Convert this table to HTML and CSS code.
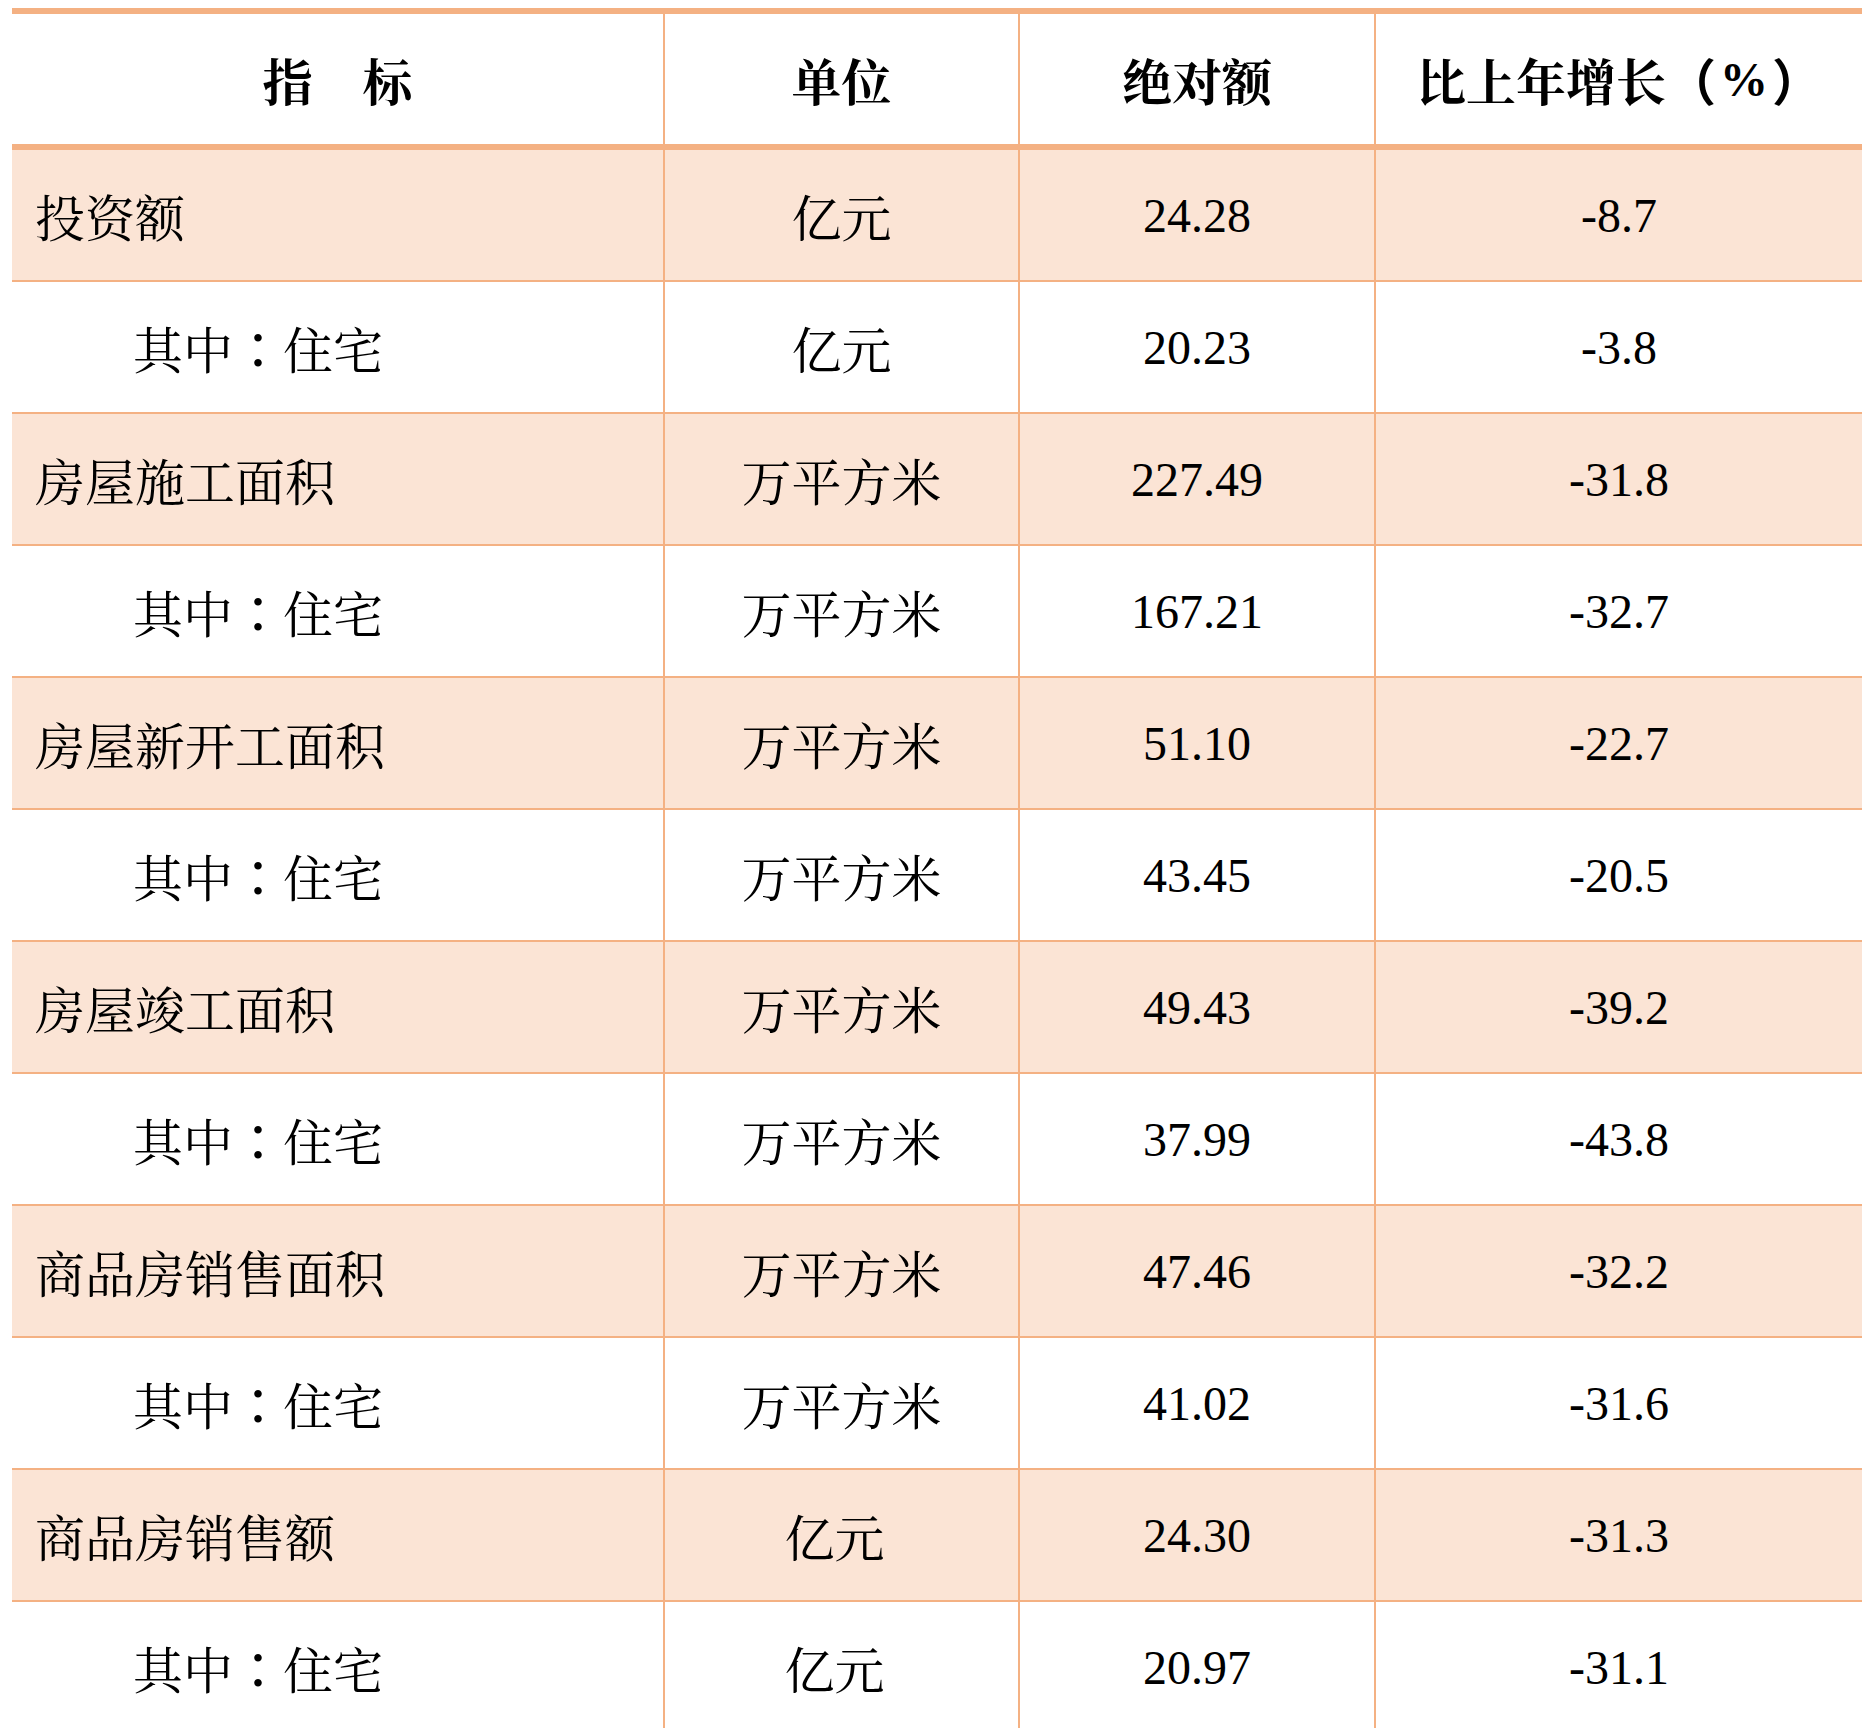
FILE: index.html
```html
<!DOCTYPE html>
<html lang="zh-CN">
<head>
<meta charset="utf-8">
<title>房地产开发主要指标</title>
<link rel="stylesheet" href="styles.css">
</head>
<body>
<div class="sheet">
  <div class="grid">
    <div class="hd c1">指　标</div>
    <div class="hd cx">单位</div>
    <div class="hd cx">绝对额</div>
    <div class="hd cx">比上年增长<span class="paren">（</span><span class="pct">%</span><span class="paren">）</span></div>

    <div class="cell c1 alt">投资额</div>
    <div class="cell cx alt">亿元</div>
    <div class="cell cx alt num">24.28</div>
    <div class="cell cx alt num">-8.7</div>

    <div class="cell c1 sub">其中<span class="colon">：</span>住宅</div>
    <div class="cell cx">亿元</div>
    <div class="cell cx num">20.23</div>
    <div class="cell cx num">-3.8</div>

    <div class="cell c1 alt">房屋施工面积</div>
    <div class="cell cx alt">万平方米</div>
    <div class="cell cx alt num">227.49</div>
    <div class="cell cx alt num">-31.8</div>

    <div class="cell c1 sub">其中<span class="colon">：</span>住宅</div>
    <div class="cell cx">万平方米</div>
    <div class="cell cx num">167.21</div>
    <div class="cell cx num">-32.7</div>

    <div class="cell c1 alt">房屋新开工面积</div>
    <div class="cell cx alt">万平方米</div>
    <div class="cell cx alt num">51.10</div>
    <div class="cell cx alt num">-22.7</div>

    <div class="cell c1 sub">其中<span class="colon">：</span>住宅</div>
    <div class="cell cx">万平方米</div>
    <div class="cell cx num">43.45</div>
    <div class="cell cx num">-20.5</div>

    <div class="cell c1 alt">房屋竣工面积</div>
    <div class="cell cx alt">万平方米</div>
    <div class="cell cx alt num">49.43</div>
    <div class="cell cx alt num">-39.2</div>

    <div class="cell c1 sub">其中<span class="colon">：</span>住宅</div>
    <div class="cell cx">万平方米</div>
    <div class="cell cx num">37.99</div>
    <div class="cell cx num">-43.8</div>

    <div class="cell c1 alt">商品房销售面积</div>
    <div class="cell cx alt">万平方米</div>
    <div class="cell cx alt num">47.46</div>
    <div class="cell cx alt num">-32.2</div>

    <div class="cell c1 sub">其中<span class="colon">：</span>住宅</div>
    <div class="cell cx">万平方米</div>
    <div class="cell cx num">41.02</div>
    <div class="cell cx num">-31.6</div>

    <div class="cell c1 alt">商品房销售额</div>
    <div class="cell cx alt shift">亿元</div>
    <div class="cell cx alt num">24.30</div>
    <div class="cell cx alt num">-31.3</div>

    <div class="cell c1 sub">其中<span class="colon">：</span>住宅</div>
    <div class="cell cx shift">亿元</div>
    <div class="cell cx num">20.97</div>
    <div class="cell cx num">-31.1</div>
  </div>
</div>
</body>
</html>
```
FILE: styles.css
```css
html, body {
  margin: 0;
  padding: 0;
  background: #ffffff;
}

.sheet {
  padding: 8px 0 0 12px;
}

.grid {
  display: grid;
  grid-template-columns: 651px 355px 356px 488px;
  width: 1850px;
  font-family: "Liberation Serif", "Noto Serif CJK SC", "Noto Sans CJK SC", serif;
  font-size: 50px;
  color: #000000;
}

.hd,
.cell {
  box-sizing: border-box;
  display: flex;
  align-items: center;
  white-space: nowrap;
}

.hd {
  height: 142px;
  border-top: 6px solid #f4b183;
  border-bottom: 6px solid #f4b183;
  font-weight: 700;
  justify-content: center;
}

.hd .paren {
  font-family: "Noto Sans CJK TC", "Noto Sans CJK SC", sans-serif;
}

.hd .pct {
  font-size: 48px;
  padding: 0 4px;
}

.cell {
  height: 132px;
  border-bottom: 2px solid #f4b183;
  background: #ffffff;
}

.cell.alt {
  background: #fbe4d5;
}

.cell.num {
  font-size: 48px;
}

.cx {
  justify-content: center;
  border-left: 2px solid #f4b183;
}

.cell.c1 {
  justify-content: flex-start;
  padding-left: 23px;
}

.cell.c1.sub {
  padding-left: 121px;
}

.colon {
  font-family: "Noto Sans CJK TC", "Noto Sans CJK SC", sans-serif;
}

.cell.shift {
  padding-right: 14px;
}
```
